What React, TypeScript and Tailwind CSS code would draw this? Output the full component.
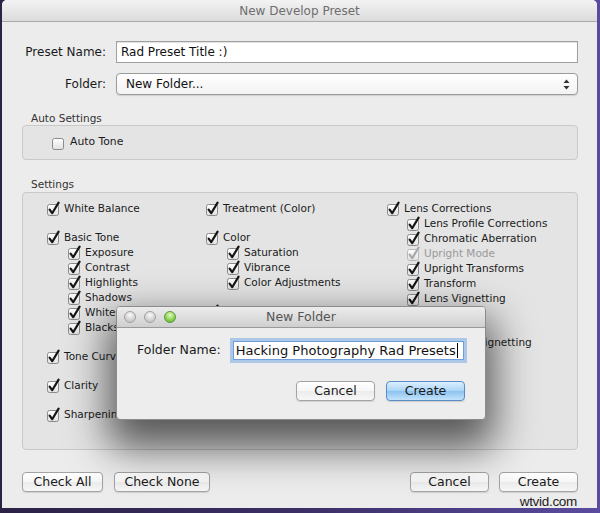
import React from "react";

type Item = { label: string; disabled?: boolean };
type Group = { label: string; children?: Item[] };

function Check({ checked = true, disabled = false }: { checked?: boolean; disabled?: boolean }) {
  return (
    <svg width="13" height="14" viewBox="0 0 13 14" className="shrink-0 overflow-visible">
      <defs>
        <linearGradient id="cbg" x1="0" y1="0" x2="0" y2="1">
          <stop offset="0" stopColor="#ffffff" />
          <stop offset="1" stopColor="#e0e0e0" />
        </linearGradient>
      </defs>
      <rect x="0.5" y="2.5" width="11" height="11" rx="2" fill="url(#cbg)" stroke={disabled ? "#b8b8b8" : "#8a8a8a"} />
      {checked && (
        <path
          d="M2.6 7.6 L5.2 11.2 L11.6 0.6"
          fill="none"
          stroke={disabled ? "#a9a9a9" : "#151515"}
          strokeWidth="2.2"
          strokeLinecap="round"
          strokeLinejoin="round"
        />
      )}
    </svg>
  );
}

function Row({ label, disabled }: Item) {
  return (
    <div className="flex h-[15px] items-center gap-[4px] whitespace-nowrap">
      <Check disabled={disabled} />
      <span className={disabled ? "text-[#9a9a9a]" : "text-[#1a1a1a]"}>{label}</span>
    </div>
  );
}

function Column({ groups, indent }: { groups: Group[]; indent: string }) {
  return (
    <div className="flex flex-col gap-[14px]">
      {groups.map((g) => (
        <div key={g.label} className="flex flex-col">
          <Row label={g.label} />
          {g.children && (
            <div className={"flex flex-col " + indent}>
              {g.children.map((c) => (
                <Row key={c.label} label={c.label} disabled={c.disabled} />
              ))}
            </div>
          )}
        </div>
      ))}
    </div>
  );
}

const col1: Group[] = [
  { label: "White Balance" },
  {
    label: "Basic Tone",
    children: [
      { label: "Exposure" },
      { label: "Contrast" },
      { label: "Highlights" },
      { label: "Shadows" },
      { label: "Whites" },
      { label: "Blacks" },
    ],
  },
  { label: "Tone Curve" },
  { label: "Clarity" },
  { label: "Sharpening" },
];

const col2: Group[] = [
  { label: "Treatment (Color)" },
  {
    label: "Color",
    children: [{ label: "Saturation" }, { label: "Vibrance" }, { label: "Color Adjustments" }],
  },
  { label: "Split Toning" },
  { label: "Graduated Filters" },
  { label: "Radial Filters" },
  { label: "Noise Reduction" },
];

const col3: Group[] = [
  {
    label: "Lens Corrections",
    children: [
      { label: "Lens Profile Corrections" },
      { label: "Chromatic Aberration" },
      { label: "Upright Mode", disabled: true },
      { label: "Upright Transforms" },
      { label: "Transform" },
      { label: "Lens Vignetting" },
    ],
  },
  {
    label: "Effects",
    children: [{ label: "Post-Crop Vignetting" }, { label: "Grain" }],
  },
  { label: "Process Version" },
];

function MacButton({ children, w, primary = false }: { children: React.ReactNode; w: string; primary?: boolean }) {
  return (
    <div
      className={
        "flex h-[20px] items-center justify-center rounded-[4px] border text-[12.5px] text-[#1a1a1a] " +
        w +
        (primary
          ? " border-[#5a8cc6] bg-[linear-gradient(#dcefff,#a9d4f7_50%,#8cc3f0_52%,#c4e3fb)] shadow-[0_1px_1px_rgba(0,0,0,0.15)]"
          : " border-[#a3a3a3] bg-[linear-gradient(#ffffff,#f6f6f6_50%,#ececec_52%,#f7f7f7)] shadow-[0_1px_1px_rgba(0,0,0,0.12)]")
      }
    >
      {children}
    </div>
  );
}

function Light({ green = false }: { green?: boolean }) {
  return (
    <div
      className={
        "h-[12px] w-[12px] rounded-full border " +
        (green
          ? "border-[#5f9a3c] bg-[radial-gradient(circle_at_50%_30%,#e4fbc4,#8fd456_55%,#5aa52e)]"
          : "border-[#a2a2a2] bg-[radial-gradient(circle_at_50%_30%,#fbfbfb,#d4d4d4_55%,#b9b9b9)]")
      }
    />
  );
}

export default function App() {
  return (
    <div className="h-[513px] w-[600px] overflow-hidden bg-[linear-gradient(90deg,#2b2246,#3b2f66_50%,#5b4ba0)] pl-[2px] font-['DejaVu_Sans',sans-serif]">
      <div className="relative h-[508px] w-[595px] rounded-t-[5px] bg-[#ececec]">
        {/* title bar */}
        <div className="flex h-[22px] items-center justify-center rounded-t-[5px] border-b border-[#a9a9a9] bg-[linear-gradient(#f3f3f3,#dcdcdc)] text-[12px] text-[#6e6e6e]">
          New Develop Preset
        </div>

        <div className="pl-[20px] pr-[19px]">
          {/* preset name */}
          <div className="mt-[19px] flex h-[22px] items-center gap-[10px]">
            <div className="w-[84px] text-right text-[12px] text-[#1a1a1a]">Preset Name:</div>
            <div className="flex h-[22px] w-[462px] items-center border border-[#a0a0a0] bg-white pl-[4px] text-[12px] text-[#111] shadow-[inset_0_1px_1px_rgba(0,0,0,0.12)]">
              Rad Preset Title :)
            </div>
          </div>

          {/* folder */}
          <div className="mt-[10px] flex h-[22px] items-center gap-[10px]">
            <div className="w-[84px] text-right text-[12px] text-[#1a1a1a]">Folder:</div>
            <div className="flex h-[22px] w-[462px] items-center justify-between rounded-[4px] border border-[#9b9b9b] bg-[linear-gradient(#ffffff,#f3f3f3)] pl-[9px] pr-[7px] text-[12px] text-[#111] shadow-[0_1px_1px_rgba(0,0,0,0.12)]">
              <span>New Folder...</span>
              <svg width="7" height="11" viewBox="0 0 7 11">
                <path d="M3.5 0.5 L6.5 4 L0.5 4 Z" fill="#333" />
                <path d="M3.5 10.5 L6.5 7 L0.5 7 Z" fill="#333" />
              </svg>
            </div>
          </div>

          {/* auto settings */}
          <div className="mt-[16px] h-[14px] pl-[9px] text-[10.5px] leading-[14px] text-[#333]">Auto Settings</div>
          <div className="flex h-[35px] items-center rounded-[4px] border border-[#c9c9c9] bg-[#e4e4e4] pl-[29px]">
            <div className="flex items-center gap-[5px] text-[10.8px] text-[#1a1a1a]">
              <Check checked={false} />
              <span>Auto Tone</span>
            </div>
          </div>

          {/* settings */}
          <div className="mt-[17px] h-[14px] pl-[9px] text-[10.5px] leading-[14px] text-[#333]">Settings</div>
          <div className="mt-[1px] h-[258px] rounded-[4px] border border-[#c9c9c9] bg-[#e4e4e4] pl-[24px] pt-[8px] text-[10.5px]">
            <div className="grid grid-cols-[159px_181px_1fr]">
              <Column groups={col1} indent="pl-[21px]" />
              <Column groups={col2} indent="pl-[21px]" />
              <Column groups={col3} indent="pl-[20px]" />
            </div>
          </div>

          {/* bottom buttons */}
          <div className="mt-[22px] flex items-center justify-between">
            <div className="flex gap-[11px]">
              <MacButton w="w-[81px]">Check All</MacButton>
              <MacButton w="w-[96px]">Check None</MacButton>
            </div>
            <div className="flex gap-[10px]">
              <MacButton w="w-[79px]">Cancel</MacButton>
              <MacButton w="w-[79px]">Create</MacButton>
            </div>
          </div>
        </div>

        {/* New Folder dialog */}
        <div className="absolute left-[114px] top-[306px] h-[114px] w-[370px] overflow-hidden rounded-[4px] border border-[#8c8c8c] bg-[#ededed] shadow-[0_20px_40px_8px_rgba(0,0,0,0.62)]">
          <div className="relative flex h-[21px] items-center justify-center border-b border-[#9a9a9a] bg-[linear-gradient(#ececec,#cfcfcf)] text-[12.5px] text-[#555]">
            <div className="absolute left-[7px] top-[4px] flex gap-[8px]">
              <Light />
              <Light />
              <Light green />
            </div>
            New Folder
          </div>
          <div className="pl-[20px] pt-[13px]">
            <div className="flex h-[19px] items-center">
              <span className="text-[12.5px] text-[#1a1a1a]">Folder Name:</span>
              <div className="ml-[12px] flex h-[19px] w-[231px] items-center border border-[#6f9ed8] bg-white pl-[2px] text-[13px] text-[#111] shadow-[0_0_0_3px_rgba(120,168,226,0.55)]">
                <span>Hacking Photography Rad Presets</span>
                <span className="ml-[1px] h-[15px] w-[1px] bg-black" />
              </div>
            </div>
            <div className="mt-[21px] flex justify-end gap-[11px] pr-[20px]">
              <MacButton w="w-[79px]">Cancel</MacButton>
              <MacButton w="w-[79px]" primary>
                Create
              </MacButton>
            </div>
          </div>
        </div>

        {/* watermark */}
        <div className="absolute bottom-[-4px] right-[20px] font-['Liberation_Sans',sans-serif] text-[13.5px] tracking-[-0.3px] text-[#222]">
          wtvid.com
        </div>
      </div>
    </div>
  );
}
